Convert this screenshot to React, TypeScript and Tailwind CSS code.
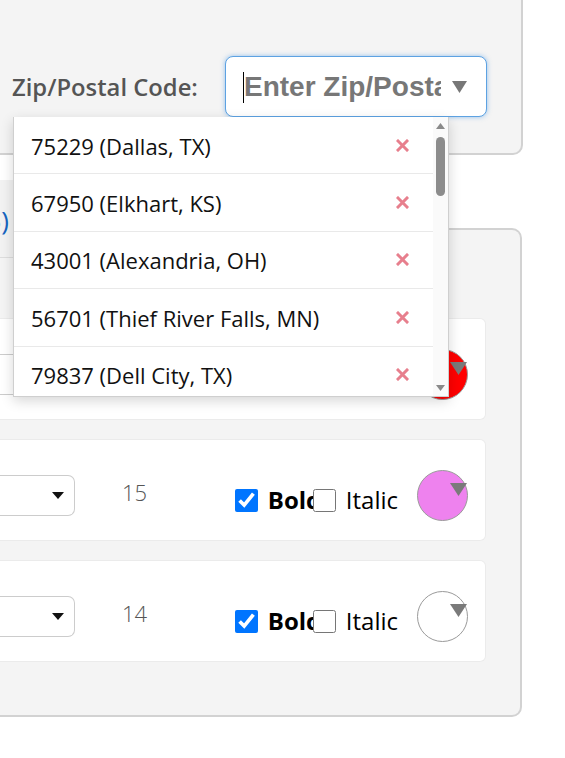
import React from "react";

const zips = [
  "75229 (Dallas, TX)",
  "67950 (Elkhart, KS)",
  "43001 (Alexandria, OH)",
  "56701 (Thief River Falls, MN)",
  "79837 (Dell City, TX)",
  "10001 (New York, NY)",
];

function XMark() {
  return (
    <svg width="13" height="13" viewBox="0 0 13 13">
      <path d="M2 2L11 11M11 2L2 11" stroke="#e77f8d" strokeWidth="3" strokeLinecap="square" />
    </svg>
  );
}

function StyleCard({ size, swatch }: { size: string; swatch: string }) {
  return (
    <div className="h-[102px] w-[486px] bg-white border border-l-0 border-[#ebebeb] rounded-r-[6px] flex items-start pr-[17px]">
      <div className="mt-[35px] h-[41px] w-[75px] bg-white border border-l-0 border-[#cccccc] rounded-r-[7px] flex items-center justify-end pr-[10px]">
        <svg width="12" height="7" viewBox="0 0 12 7">
          <path d="M0 0H12L6 7Z" fill="#111" />
        </svg>
      </div>
      <div className="ml-[47px] mt-[39px] text-[22px] leading-[26px] text-[#555] font-light">{size}</div>
      <div className="ml-auto mt-[46px] flex items-center text-[24px] leading-[28px] text-black">
        <input type="checkbox" checked readOnly className="w-[23px] h-[23px] m-0" />
        <span className="ml-[10px] w-[45px] font-bold whitespace-nowrap">Bold</span>
        <input type="checkbox" readOnly className="relative w-[23px] h-[23px] m-0" />
        <span className="ml-[10px]">Italic</span>
      </div>
      <div className={"relative ml-[19px] mt-[30px] w-[51px] h-[51px] rounded-full border border-[#9a9a9a] " + swatch}>
        <svg className="absolute left-[32px] top-[12px]" width="17" height="13" viewBox="0 0 17 13">
          <path d="M0 0H17L8.5 13Z" fill="#7a7a7a" />
        </svg>
      </div>
    </div>
  );
}

export default function App() {
  return (
    <div className="relative w-[565px] min-h-[758px] bg-white font-['Open_Sans','Noto_Sans',sans-serif] overflow-hidden">
      {/* Top panel */}
      <div className="relative z-20 h-[155px] w-[523px] bg-[#f4f4f4] border-r-2 border-b-2 border-[#d2d2d2] rounded-br-[10px] flex items-end pb-[36px] pl-[12px]">
        <div className="flex items-center">
          <label className="w-[213px] text-[23.8px] font-semibold text-[#555] leading-[30px] whitespace-nowrap">Zip/Postal Code:</label>
          <div className="relative w-[262px] h-[61px]">
            <input
              readOnly
              placeholder="Enter Zip/Postal Code"
              className="w-full h-full rounded-[8px] border border-[#5da2e2] shadow-[0_0_5px_rgba(70,150,230,0.55)] bg-white pl-[18px] pr-[45px] font-['Liberation_Sans',Arial,sans-serif] text-[28px] font-bold text-[#333] placeholder:text-[#777] outline-none"
            />
            <span className="absolute left-[18px] top-[16px] h-[31px] w-px bg-black" />
            <svg className="absolute left-[227px] top-[25px]" width="15" height="12" viewBox="0 0 15 12">
              <path d="M0 0H15L7.5 12Z" fill="#777" />
            </svg>
          </div>
        </div>

        {/* Dropdown list */}
        <div className="absolute left-[13px] top-[117px] w-[436px] h-[280px] bg-white border border-t-0 border-[#cfcfcf] shadow-[0_4px_12px_rgba(0,0,0,0.16)] flex">
          <div className="flex-1 overflow-hidden">
            {zips.map((z) => (
              <div
                key={z}
                className="h-[57.4px] flex items-center justify-between pl-[17px] pr-[24px] border-b border-[#e9e9e9] text-[22px] text-[#111]"
              >
                <span className="pt-[2px]">{z}</span>
                <XMark />
              </div>
            ))}
          </div>
          <div className="w-[15px] bg-[#fafafa] flex flex-col items-center">
            <svg className="mt-[6px]" width="9" height="6" viewBox="0 0 9 6">
              <path d="M0 6H9L4.5 0Z" fill="#8a8a8a" />
            </svg>
            <div className="mt-[8px] w-[9px] h-[59px] rounded-full bg-[#8c8c8c]" />
            <div className="flex-1" />
            <svg className="mb-[5px]" width="9" height="6" viewBox="0 0 9 6">
              <path d="M0 0H9L4.5 6Z" fill="#8a8a8a" />
            </svg>
          </div>
        </div>
      </div>

      {/* Bottom panel */}
      <div className="relative mt-[73px] w-[522px] h-[489px] bg-[#f4f4f4] border-t-2 border-r-2 border-b-2 border-[#d2d2d2] rounded-tr-[10px] rounded-br-[10px]">
        <div className="absolute left-0 top-[-50px] h-[78px] w-[300px] bg-[#f2f2f2] border-b border-[#dddddd]">
          <span className="absolute right-[calc(100%-9px)] top-[24px] whitespace-nowrap text-[26px] leading-[32px] text-[#1565c0]">
            Saved Styles (3)
          </span>
        </div>
        <div className="pt-[88px] flex flex-col gap-[19px]">
          <StyleCard size="16" swatch="bg-[#ff0000]" />
          <StyleCard size="15" swatch="bg-[#ee82ee]" />
          <StyleCard size="14" swatch="bg-white" />
        </div>
      </div>
    </div>
  );
}
